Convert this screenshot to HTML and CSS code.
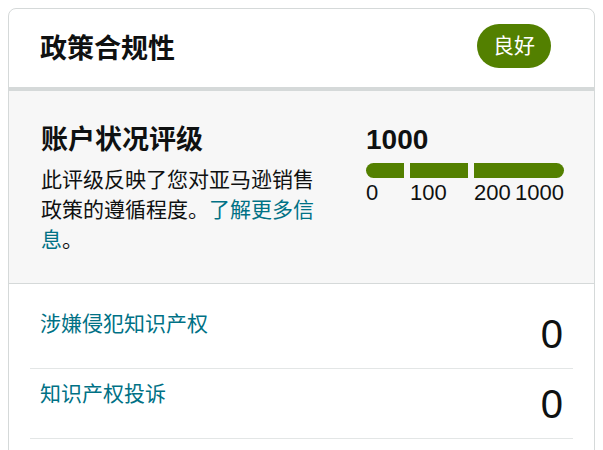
FILE: index.html
```html
<!DOCTYPE html>
<html lang="zh-CN">
<head>
    <meta charset="UTF-8">
    <meta name="viewport" content="width=device-width, initial-scale=1.0">
    <title>政策合规性</title>
    <link rel="stylesheet" href="styles.css">
</head>
<body>
    <div class="card">
        <div class="card-header">
            <h2 class="card-title">政策合规性</h2>
            <span class="status-badge">良好</span>
        </div>

        <div class="health-section">
            <div class="health-info">
                <h3 class="health-title">账户状况评级</h3>
                <p class="health-text">此评级反映了您对亚马逊销售政策的遵循程度。<a href="#" class="link">了解更多信息</a>。</p>
            </div>
            <div class="health-score">
                <div class="score-value">1000</div>
                <div class="score-bar">
                    <span class="bar-seg seg-low"></span>
                    <span class="bar-seg seg-mid"></span>
                    <span class="bar-seg seg-high"></span>
                </div>
                <div class="score-labels">
                    <span class="label-low">0</span>
                    <span class="label-mid">100</span>
                    <span class="label-high">200</span>
                    <span class="label-max">1000</span>
                </div>
            </div>
        </div>

        <ul class="issue-list">
            <li class="issue-row">
                <a href="#" class="link issue-name">涉嫌侵犯知识产权</a>
                <span class="issue-count">0</span>
            </li>
            <li class="issue-row">
                <a href="#" class="link issue-name">知识产权投诉</a>
                <span class="issue-count">0</span>
            </li>
        </ul>
    </div>
</body>
</html>
```

FILE: styles.css
```css
body {
    margin: 8px;
    font-family: "Liberation Sans", "Noto Sans CJK SC", sans-serif;
    font-size: 21px;
    line-height: 30px;
    color: #0f1111;
    background: #fff;
}
.card {
    border: 1px solid #d5d9d9;
    border-radius: 8px;
    overflow: hidden;
}
.card-header {
    display: flex;
    justify-content: space-between;
    align-items: center;
    padding: 15px 43px 19px 31px;
    border-bottom: 4px solid #d5d9d9;
}
.card-title {
    margin: 0;
    padding-top: 6px;
    font-size: 27px;
    line-height: 36px;
    font-weight: bold;
}
.status-badge {
    background: #538000;
    color: #fff;
    padding: 7px 16px;
    border-radius: 22px;
    line-height: 30px;
}
.link {
    color: #007185;
    text-decoration: none;
}

/* account health block */
.health-section {
    display: grid;
    grid-template-columns: 280px 198px;
    column-gap: 45px;
    padding: 31px 30px 28px 32px;
    background: #f7f7f7;
    border-bottom: 1px solid #d5d9d9;
}
.health-title {
    margin: 0 0 7px;
    font-size: 27px;
    line-height: 36px;
    font-weight: bold;
}
.health-text {
    margin: 0;
}
.score-value {
    font-size: 28px;
    line-height: 36px;
    font-weight: bold;
    margin-bottom: 5px;
}
.score-bar {
    display: flex;
    gap: 6px;
    height: 15px;
}
.bar-seg {
    background: #538000;
}
.seg-low {
    width: 38px;
    border-radius: 8px 0 0 8px;
}
.seg-mid {
    width: 58px;
}
.seg-high {
    flex: 1;
    border-radius: 0 8px 8px 0;
}
.score-labels {
    display: flex;
    font-size: 22px;
}
.label-low {
    width: 44px;
}
.label-mid {
    width: 64px;
}
.label-max {
    margin-left: auto;
}

/* defect rows */
.issue-list {
    list-style: none;
    margin: 0;
    padding: 15px 21px 20px;
}
.issue-row {
    display: flex;
    justify-content: space-between;
    align-items: flex-start;
    padding: 10px 10px 9px;
    border-bottom: 1px solid #e3e6e6;
}
.issue-name {
    line-height: 30px;
}
.issue-count {
    font-size: 40px;
    line-height: 50px;
}
```
